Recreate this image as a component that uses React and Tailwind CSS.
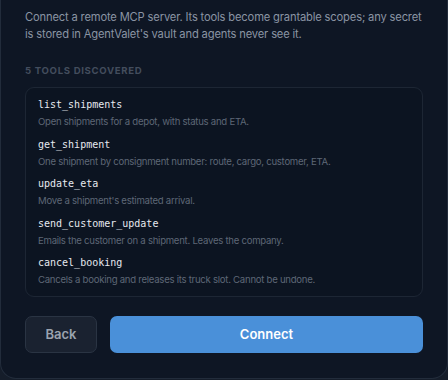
const tools = [
  { name: "list_shipments", desc: "Open shipments for a depot, with status and ETA." },
  { name: "get_shipment", desc: "One shipment by consignment number: route, cargo, customer, ETA." },
  { name: "update_eta", desc: "Move a shipment's estimated arrival." },
  { name: "send_customer_update", desc: "Emails the customer on a shipment. Leaves the company." },
  { name: "cancel_booking", desc: "Cancels a booking and releases its truck slot. Cannot be undone." },
];

export default function App() {
  return (
    <div className="h-[380px] w-[448px] bg-[#151d2a] font-['Inter',sans-serif]">
      <div className="h-[379px] w-full rounded-b-[16px] border border-t-0 border-[#222c3b] bg-[#0e1624] px-[24px] pt-[9px]">
        <p className="text-[11.2px] leading-[17px] tracking-[-0.015em] text-[#8a94a3]">
          Connect a remote MCP server. Its tools become grantable scopes; any secret is stored in AgentValet's vault and agents never see it.
        </p>

        <div className="mt-[22px] text-[9.6px] font-bold uppercase leading-[12px] tracking-[0.07em] text-[#434d5d]">
          5 tools discovered
        </div>

        <div className="mt-[10px] flex flex-col gap-[8.5px] rounded-[9px] border border-[#1d2634] bg-[#0c1421] px-[12px] pt-[10px] pb-[9px]">
          {tools.map((t) => (
            <div key={t.name}>
              <div className="font-['DejaVu_Sans_Mono',monospace] text-[10px] leading-[14px] text-[#e6e9ef]">{t.name}</div>
              <div className="mt-[3px] text-[9.6px] leading-[14px] tracking-[-0.028em] text-[#5e6776]">{t.desc}</div>
            </div>
          ))}
        </div>

        <div className="mt-[19px] flex gap-[13px]">
          <button className="h-[37px] w-[72px] rounded-[7px] border border-[#2a3443] bg-[#1a2230] text-[13px] font-semibold text-[#9ba3af]">
            Back
          </button>
          <button className="h-[37px] flex-1 rounded-[7px] bg-[#4a90d9] text-[13px] font-semibold text-white">
            Connect
          </button>
        </div>
      </div>
    </div>
  );
}
